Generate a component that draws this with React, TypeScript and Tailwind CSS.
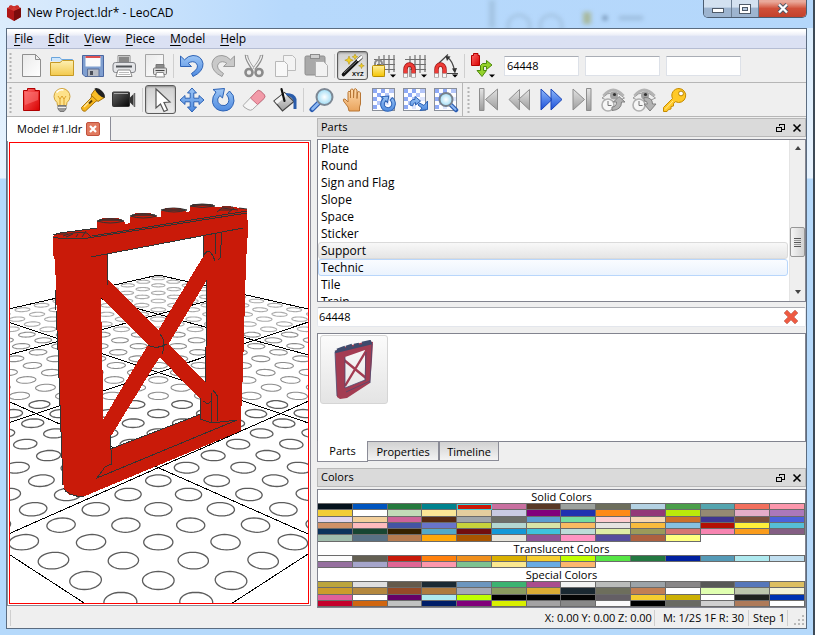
import type { ReactNode } from "react";

/* ---------- Swatch data ---------- */

const SOLID = [
  "#05131d", "#0055bf", "#257a3e", "#00838f", "#c91a09", "#c870a0", "#583927", "#9ba19d", "#6d6e5c", "#b4d2e3", "#4b9f4a", "#55a5af", "#f2705e", "#fc97ac",
  "#f2cd37", "#ffffff", "#c2dab8", "#fbe696", "#e4cd9e", "#c9cae2", "#81007b", "#2032b0", "#fe8a18", "#923978", "#bbe90b", "#958a73", "#e4adc8", "#ac78ba",
  "#e1d5ed", "#f3cf9b", "#cd6298", "#582a12", "#a0a5a9", "#6c6e68", "#5c9dd1", "#73dca1", "#fecccf", "#f6d7b3", "#cc702a", "#3f3691", "#7c503a", "#4c61db",
  "#d09168", "#febabd", "#4354a3", "#6874ca", "#c7d23c", "#b3d7d1", "#d9e4a7", "#f9ba61", "#e6e3e0", "#f8bb3d", "#86c1e1", "#b31004", "#fff03a", "#56bed6",
  "#0d325b", "#184632", "#352100", "#54a9c8", "#720e0f", "#1498d7", "#3ec2dd", "#bddcd8", "#dfeea5", "#9b9a5a", "#d67572", "#f785b1", "#fa9c1c", "#845e84",
  "#a0bcac", "#597184", "#b67b50", "#ffa70b", "#a95500", "#e6e3da", "#8e5597", "#ff94c2", "#564e9d", "#ad6140", "#ffff80",
];
const TRANSLUCENT = [
  "#fcfcfc", "#635f52", "#c91a09", "#ff800d", "#f08f1c", "#dab000", "#f5cd2f", "#c0ff00", "#56e646", "#237841", "#0020a0", "#559ab7", "#aee9ef", "#c1dff0",
  "#96709f", "#a5a5cb", "#df6695", "#fc97ac", "#7dc291", "#fbe890", "#68abe4", "#fcb76d",
];
const SPECIAL = [
  "#bba53d", "#dfdfdf", "#645a4c", "#1b2a34", "#6c96bf", "#3cb371", "#aa4d8e", "#f2f3f2", "#babcbb", "#9ca3a8", "#898788", "#575857", "#5677ba", "#dcbe61",
  "#cc9c2b", "#b4883e", "#964a27", "#ae7a3e", "#a5a9b4", "#899b5f", "#dbac34", "#1a2831", "#6d6e5c", "#c27f53", "#ffffff", "#e0ffb0", "#bdc6ad", "#f5f3d7",
  "#e0609a", "#ffffff", "#660066", "#aee9ef", "#c0ff00", "#000000", "#050505", "#050505", "#645f65", "#f5cd2f", "#ccb004", "#ffffff", "#20221f", "#0033b2",
  "#c4002b", "#d06610", "#c1c2c1", "#001d68", "#81007b", "#d9f000", "#a3a2a3", "#888888", "#fafafa", "#000000", "#696a62", "#d0d0d0", "#ae7a59", "#ffffff",
];

const CATEGORIES = ["Plate", "Round", "Sign and Flag", "Slope", "Space", "Sticker", "Support", "Technic", "Tile", "Train"];
const MENUS = ["File", "Edit", "View", "Piece", "Model", "Help"];

/* ---------- 3D viewport ---------- */

// Projects a baseplate position (in cells, 0..4 on both axes) to the canvas.
function project(u: number, v: number): [number, number] {
  const t = (u + v) / 2;
  const s = (u - v) / 2;
  const w = 1 - 0.1625 * t;
  return [158.3 + (145 * s) / w, (275 - 11.78 * t) / w];
}

function pathOf(points: [number, number][]) {
  return points.map(([x, y], i) => (i ? "L" : "M") + x.toFixed(1) + " " + y.toFixed(1)).join("");
}

const STUDS: { d: string; tone: number }[] = [];
for (let i = 0; i < 20; i++) {
  for (let j = 0; j < 20; j++) {
    const u = (i + 0.5) / 5;
    const v = (j + 0.5) / 5;
    const [x, y] = project(u, v);
    if (x < -10 || x > 330 || y > 625) continue;
    const ring: [number, number][] = [];
    for (let k = 0; k < 32; k++) {
      const a = (k * Math.PI) / 16;
      ring.push(project(u + 0.0615 * Math.cos(a), v + 0.0615 * Math.sin(a)));
    }
    STUDS.push({ d: pathOf(ring) + "Z", tone: (u + v) / 8 });
  }
}

const GRID = [0, 1, 2, 3, 4]
  .map((k) => pathOf([project(k, 0), project(k, 4)]) + pathOf([project(0, k), project(4, k)]))
  .join("");

const FRAME =
  "M53 236 L60 233 L97 228 V221 L103 218 H118 L125 222 V224 L130 223 V217 L136 213 H150 L157 217 L161 217 V211 L166 208 H180 L187 212 L190 211 V206 L194 204 H210 L215 207 L228 206 L247 209 L248 230 L246 262 L243 370 L240.500 431 L92 493 L83 497 L70 495 L64 490 L62 470 L59 380 L55 260 L53 255 Z" +
  "M107.500 254 L203.500 236 V256 L158.500 330 L107.500 279 Z" +
  "M101 297 L148 345 L132 371 L103.500 419 L102 345 Z" +
  "M207.500 279 L206.500 330 L205.500 382 L168.500 344 Z" +
  "M160 357 L173 371 L200.500 399 V414 L110.500 449 V437 L151.500 370 Z";

const EDGES =
  "M53 235 L60 233 L97 228 M53 237 Q62 240 88 238 L247 213 M92 236 L247 211 M91 257 L243 228 M107.500 254 V285 M203.500 236 V256 M215.500 234 V254 M222 233 L220 258 L218 260 M203 257 Q209 244 215 261 M55 290 L58 350 L60 405 L63 485 M207 280 L205.500 382 M148 345 Q156 350 167 344 M160 334 Q167 343 162 354 M63 488 Q68 496 84 497 M110.500 435 V449 L201 414 M111.500 450 V464 L105 467 L97 478 L237 420 M200.500 398 V419 L212 423 L237 420 M211.500 393 V423 M217.500 421 V396 L213 390 M203 401 L208 404 L211 401";

function Viewport() {
  return (
    <svg className="block min-h-0 w-full flex-1 border border-[#ff0000] bg-white" viewBox="9 143 300 460" preserveAspectRatio="xMidYMid slice" role="img" aria-label="Model view">
      <g fill="none">
        {STUDS.map((s, i) => (
          <path key={i} d={s.d} stroke={s.tone < 0.35 ? "#ababab" : s.tone < 0.6 ? "#8c8c8c" : "#5c5c5c"} strokeWidth={s.tone < 0.6 ? 1.1 : 1.3} />
        ))}
      </g>
      <path d={GRID} fill="none" stroke="#000" shapeRendering="crispEdges" />
      <path d={FRAME} fill="#c91a09" fillRule="evenodd" shapeRendering="crispEdges" />
      <path d={EDGES} fill="none" stroke="#333333" shapeRendering="crispEdges" />
      <g fill="none" stroke="#333333">
        <path d="M97 221 Q110 216 124 221 Q110 225 97 221 M130 216 Q143 211 157 216 Q143 220 130 216 M161 210 Q173 206 187 210 Q174 214 161 210 M190 206 Q202 202 215 206 Q202 209 190 206" />
        <path d="M99 220 H122 M132 215 H155 M163 210 H185 M192 205 H213" strokeWidth="1.400" />
        <path d="M63 236 Q75 231 87 233 L91 237 M66 237 L73 234 M76 237 L78 234 M82 237 L86 231 M217 212 L222 208 L238 210 M219 210 H232 M228 213 L234 208 M222 207 H233 M58 234 H68" />
        <path d="M247 209 L239 208" />
      </g>
    </svg>
  );
}

/* ---------- Icons ---------- */

function Ico({ children }: { children: ReactNode }) {
  return (
    <svg width="26" height="26" viewBox="0 0 26 26" fill="none" aria-hidden="true">
      {children}
    </svg>
  );
}

function Defs() {
  return (
    <svg width="0" height="0" className="absolute" aria-hidden="true">
      <defs>
        <linearGradient id="gBlue" x1="0" y1="0" x2="0" y2="1"><stop offset="0" stopColor="#9cc5f5" /><stop offset="1" stopColor="#4f8be0" /></linearGradient>
        <linearGradient id="gDeep" x1="0" y1="0" x2="0" y2="1"><stop offset="0" stopColor="#8db8fa" /><stop offset="1" stopColor="#1c50d8" /></linearGradient>
        <linearGradient id="gGray" x1="0" y1="0" x2="0" y2="1"><stop offset="0" stopColor="#e4e4e4" /><stop offset="1" stopColor="#9c9c9c" /></linearGradient>
        <linearGradient id="gPaper" x1="0" y1="0" x2="1" y2="1"><stop offset="0" stopColor="#e9e9e9" /><stop offset="1" stopColor="#ffffff" /></linearGradient>
        <linearGradient id="gGold" x1="0" y1="0" x2="0" y2="1"><stop offset="0" stopColor="#fff0a0" /><stop offset="1" stopColor="#f5c400" /></linearGradient>
        <linearGradient id="gFolder" x1="0" y1="0" x2="0" y2="1"><stop offset="0" stopColor="#fdf0b4" /><stop offset="1" stopColor="#f3c94c" /></linearGradient>
        <linearGradient id="gRed" x1="0" y1="0" x2="1" y2="1"><stop offset="0" stopColor="#ff6a6a" /><stop offset="1" stopColor="#d80000" /></linearGradient>
        <linearGradient id="gDark" x1="0" y1="0" x2="1" y2="1"><stop offset="0" stopColor="#666666" /><stop offset="1" stopColor="#050505" /></linearGradient>
        <linearGradient id="gSkin" x1="0" y1="0" x2="0" y2="1"><stop offset="0" stopColor="#ffdcae" /><stop offset="1" stopColor="#e9a35c" /></linearGradient>
        <radialGradient id="gLens"><stop offset="0" stopColor="#ffffff" /><stop offset="1" stopColor="#9fdcf5" /></radialGradient>
      </defs>
    </svg>
  );
}

const Arrow = () => <path d="M19 21.500 h6 l-3 3z" fill="#000" />;
const GridLines = () => <path d="M8 3 V24 M13 2 V24 M18 2 V20 M23 2 V19 M3 6.500 H24 M6 11.500 H24 M8 16.500 H24" stroke="#6f6f6f" strokeWidth="1.200" />;
const Magnet = () => (
  <>
    <path d="M3.500 24 V16.500 a4 5 0 0 1 8 0 V24" stroke="#9c1515" strokeWidth="4.400" />
    <path d="M3.500 21 V16.500 a4 5 0 0 1 8 0 V21" stroke="#ee3b36" strokeWidth="3" />
    <path d="M1.500 20.500 h4 v4 h-4z M9.500 20.500 h4 v4 h-4z" fill="#f6f6f6" stroke="#999" strokeWidth=".6" />
  </>
);
const Checker = () => (
  <>
    <rect x="1.500" y="1.500" width="22" height="22" fill="#fdfdff" stroke="#8a8f98" />
    <path d="M2 2h4v4h-4z M10 2h4v4h-4z M6 6h4v4h-4z M2 10h4v4h-4z M2 18h4v4h-4z" fill="#8ea9f5" />
    <path d="M18 2h5v4h-5z M14 6h4v4h-4z M10 10h4v4h-4z M6 14h4v4h-4z" fill="#b3c5f9" />
    <path d="M18 10h5v4h-5z M14 14h4v4h-4z M10 18h4v4h-4z" fill="#dde5fd" />
  </>
);
const Eye = () => (
  <>
    <path d="M3.500 9 Q13 -3 23.500 9" stroke="#b4b4b4" strokeWidth="3" />
    <path d="M2 11 Q13 0 24.500 11 Q13 18 2 11z" fill="#eee" stroke="#9a9a9a" />
    <circle cx="14" cy="8.500" r="4" fill="#a2a2a2" />
    <circle cx="14.500" cy="7.500" r="1.600" fill="#333" />
    <circle cx="8" cy="18" r="6" fill="#f6f6f6" stroke="#b0b0b0" strokeWidth="1.600" />
    <path d="M8 14 V18.500 H11.500" stroke="#777" />
  </>
);
const Undo = ({ gray }: { gray?: boolean }) => (
  <path d="M1.500 3 V13.500 H12.500 L9.200 10.300 Q14 7 17.500 10.500 Q21 15 12.500 20.500 L14 23.500 Q24.500 18.500 24 10.500 Q22.500 2.500 14 2.500 Q9 2.700 5.500 6.800 Z" fill={gray ? "#c9c9c9" : "url(#gBlue)"} stroke={gray ? "#9b9b9b" : "#2e63b6"} />
);

const ICONS: Record<string, ReactNode> = {
  "New": <path d="M4.500 1.500 H17.500 L22.500 6.500 V23.500 H4.500Z M17.500 1.500 V6.500 H22.500" fill="url(#gPaper)" stroke="#8f8f8f" />,
  "Open": (
    <>
      <path d="M2.500 8 V4.500 H11 L12.500 6.500 H23.500 V10" fill="#cfe6fb" stroke="#6aa5dc" />
      <path d="M1.500 9.500 H11 L13.500 7.500 H24.500 V22.500 H1.500Z" fill="url(#gFolder)" stroke="#c69a25" />
    </>
  ),
  "Save": (
    <>
      <path d="M2.500 2.500 H23.500 V23.500 H5 L2.500 21Z" fill="#7f9fd0" stroke="#4a66a0" />
      <path d="M5.500 3 H20.500 V13.500 H5.500Z" fill="#fafafa" />
      <path d="M5.500 3 H20.500 V5 H5.500Z" fill="#e05050" />
      <path d="M7.500 16 H19 V23.500 H7.500Z" fill="#b8bcc4" stroke="#5c6f96" />
      <path d="M10 18 h3 v4 h-3z" fill="#4a4e58" />
    </>
  ),
  "Print": (
    <>
      <path d="M7 2.500 H19 V11 H7Z" fill="#fff" stroke="#8a8a8a" />
      <path d="M8 3.500 H18 V10 H8Z" fill="#888" />
      <rect x="2" y="9.500" width="22.500" height="10" rx="2.500" fill="#e4e5e8" stroke="#828489" />
      <path d="M5 13.500 H21" stroke="#4f5257" strokeWidth="2" />
      <path d="M7 17 H19 L21 23.500 H5Z" fill="#fff" stroke="#8a8a8a" />
      <path d="M8 19.500 H18 M7.500 21.500 H19" stroke="#bbb" />
    </>
  ),
  "Print Preview": (
    <>
      <path d="M3.500 1.500 H21.500 V23.500 H3.500Z" fill="url(#gPaper)" stroke="#a4a4a4" />
      <path d="M14 11.500 H22 V16 H14Z" fill="#8b8b8b" stroke="#777" />
      <rect x="11.500" y="15" width="13" height="6.500" rx="1" fill="#dcdcdc" stroke="#777" />
      <path d="M13.500 17.500 H22.500" stroke="#444" />
      <path d="M14.500 19.500 H21.500 L22.500 24 H13.500Z" fill="#fff" stroke="#888" />
    </>
  ),
  "Undo": <Undo />,
  "Redo": <g transform="matrix(-1 0 0 1 26 0)"><Undo gray /></g>,
  "Cut": (
    <>
      <path d="M5.500 2 Q5 6 12 16 M20.500 2 Q21 6 13 16" stroke="#8c8c8c" strokeWidth="3.400" />
      <path d="M5.500 2.500 Q5.500 6 12 15.500 M20.500 2.500 Q20.500 6 13 15.500" stroke="#f1f1f1" strokeWidth="1.400" />
      <circle cx="8" cy="19.500" r="3.500" stroke="#8b8b8b" strokeWidth="2.600" />
      <circle cx="18" cy="19.500" r="3.500" stroke="#8b8b8b" strokeWidth="2.600" />
    </>
  ),
  "Copy": (
    <>
      <path d="M11.500 2.500 H20.500 L23.500 5.500 V17.500 H11.500Z" fill="#f3f3f3" stroke="#bcbcbc" />
      <path d="M3.500 8.500 H12.500 L15.500 11.500 V23.500 H3.500Z" fill="#f8f8f8" stroke="#b8b8b8" />
    </>
  ),
  "Paste": (
    <>
      <rect x="2" y="3" width="20" height="19" rx="1.500" fill="#a9a9a9" stroke="#8d8d8d" />
      <rect x="7.500" y="1.500" width="9" height="4" fill="#cfcfcf" stroke="#8b8b8b" />
      <path d="M12.500 8.500 H20.500 L24.500 12.500 V23.500 H12.500Z" fill="#f2f2f2" stroke="#b0b0b0" />
    </>
  ),
  "Relative Transforms": (
    <>
      <path d="M3.500 21.500 L21 4.500" stroke="#111" strokeWidth="3.600" strokeLinecap="round" />
      <path d="M18 7 L21.500 4" stroke="#fff" strokeWidth="2.400" strokeLinecap="round" />
      <path d="M4 20 L17 8" stroke="#777" />
      <path d="M9 3 l1.200 3 3 1.200 -3 1.200 -1.200 3 -1.200 -3 -3 -1.200 3 -1.200z M15 1 l.8 2 2 .8 -2 .8 -.8 2 -.8 -2 -2 -.8 2 -.8z M21.500 10 l.8 2 2 .8 -2 .8 -.8 2 -.8 -2 -2 -.8 2 -.8z" fill="#f3d024" stroke="#a88a10" strokeWidth=".5" />
      <text x="12" y="23" fontSize="6" fontWeight="bold" fontFamily="Liberation Sans, sans-serif" fill="#000">XYZ</text>
    </>
  ),
  "Lock": (
    <>
      <GridLines />
      <path d="M4 13 V10.500 a3.500 3.500 0 0 1 7 0 V13" stroke="#8b8b8b" strokeWidth="2" />
      <rect x="1.500" y="12.500" width="12" height="11" rx="1" fill="url(#gGold)" stroke="#b88d00" />
      <Arrow />
    </>
  ),
  "Snap Move": <><GridLines /><Magnet /><Arrow /></>,
  "Snap Angle": (
    <>
      <path d="M6 10 L15 1.500 M14 20.500 H25" stroke="#444" strokeWidth="1.200" />
      <path d="M14 4 Q20 8 21.500 18" stroke="#444" strokeWidth="1.300" />
      <path d="M12.500 3 l5 .5 -3.500 4.500z M19 15.500 l5 -.5 -2 5.500z" fill="#333" />
      <Magnet />
      <Arrow />
    </>
  ),
  "Transform": (
    <>
      <path d="M3.500 2.500 V.5 H8 V2.500 H9.500 V12.500 H1.500 V2.500Z" fill="url(#gRed)" stroke="#b30000" />
      <path d="M12.500 10.500 H16.500 V7.500 L22 12 L16.500 16.500 V13.500 H13.500 V17.500 H16.500 L12 23.500 L7 17.500 H10.500 V12.500z" fill="#94d22b" stroke="#4d8a0d" />
      <Arrow />
    </>
  ),
  "Insert Piece": (
    <>
      <path d="M9.500 3.500 V1.500 H17 V3.500 H21.500 V23.500 H5.500 V3.500Z" fill="url(#gRed)" stroke="#b00000" />
      <path d="M7 5 H20 V13 L7 18Z" fill="#ff8585" opacity=".45" />
    </>
  ),
  "Light": (
    <>
      <path d="M13 1.500 a8 8 0 0 1 8 8 q0 3.500 -3 6 l-.5 3 h-9 l-.5 -3 q-3 -2.500 -3 -6 a8 8 0 0 1 8 -8z" fill="#fde28a" stroke="#cfa23a" />
      <path d="M9 9 l2 3 2 -3 2 3 2 -3 M11 12 v6 M15 12 v6" stroke="#d99a20" strokeWidth=".9" />
      <path d="M7.500 5.500 q3 -3.500 7 -2.500" stroke="#fff" strokeWidth="1.600" />
      <path d="M9 18.500 h8 v3.500 l-2 2.500 h-4 l-2 -2.500z" fill="#9a9a9a" stroke="#777" />
      <path d="M9 20.500 h8" stroke="#eee" />
    </>
  ),
  "Spotlight": (
    <>
      <path d="M1.500 20.500 L11 11 L12 7 L18 13 L15 15 L5.500 24 Q2 25 1.500 20.500z" fill="#f8b820" stroke="#a8730a" />
      <path d="M11 8 L15 2.500 L24.500 10.500 L18 14.500z" fill="#f9bd25" stroke="#a8730a" />
      <path d="M14.500 1.500 Q18 0 22 4 T24.500 11 Q21 10 18.500 7.500 T14.500 1.500z" fill="#222" />
      <path d="M4 20 L11 13" stroke="#ffe9a0" strokeWidth="1.500" />
      <path d="M9 16.500 l3 -3" stroke="#5c3d00" strokeWidth="2" />
    </>
  ),
  "Camera": (
    <>
      <rect x="1.500" y="5" width="17" height="14.500" rx="1" fill="url(#gDark)" stroke="#333" />
      <path d="M3 6.500 H17" stroke="#aaa" />
      <path d="M18.500 11 L22.500 7 V19 L18.500 15z" fill="#333" />
      <path d="M23.500 6 V20" stroke="#666" strokeWidth="1.500" />
    </>
  ),
  "Select": <path d="M8 2 V21 L12.500 17 L16 24.500 L19.500 23 L16 15.500 L22 15z" fill="#fff" stroke="#555" strokeWidth="1.200" />,
  "Move": <path d="M13 1 L17.500 6 H14.800 V11.200 H20 V8.500 L25 13 L20 17.500 V14.800 H14.800 V20 H17.500 L13 25 L8.500 20 H11.200 V14.800 H6 V17.500 L1 13 L6 8.500 V11.200 H11.200 V6 H8.500z" fill="url(#gBlue)" stroke="#2c62b5" />,
  "Rotate": <path d="M3 2.500 L14.500 1.500 L12.500 11 L9.800 8.500 Q6.500 12 8 15.500 Q10.500 19.500 15 18.500 Q20 16 18.500 11 Q17.800 9 16.500 7.500 L19.500 4 Q24.500 8 24 14 Q22.500 24 13 24 Q4.500 23.500 2.500 15.500 Q2 9.500 6 5z" fill="url(#gBlue)" stroke="#2c62b5" />,
  "Delete": (
    <>
      <path d="M3 17.500 L15.500 4.500 Q17.500 2.500 19.500 4 L23.500 8 Q24.500 10 23 11.500 L11.500 22.500 Q9.500 24 7 22.500 L3 20 Q1.500 18.500 3 17.500z" fill="#f5f5f5" stroke="#a8a8a8" />
      <path d="M9.500 11 L15.500 4.500 Q17.500 2.500 19.500 4 L23.500 8 Q24.500 10 23 11.500 L16.500 17.500z" fill="#f29aa8" stroke="#cc6f80" />
    </>
  ),
  "Paint": (
    <>
      <path d="M2 14 L12.500 5.500 L22 14.500 L10.500 24z" fill="url(#gGray)" stroke="#444" strokeWidth="1.200" />
      <path d="M2.500 14 L12.500 6 L15 8.500 L5 17z" fill="#f4f4f4" />
      <path d="M12.500 14 L9.500 2" stroke="#111" strokeWidth="2.200" strokeLinecap="round" />
      <path d="M14 6 Q23 6 24.500 12 V22 H21.500 V14 Q20 9.500 14 8z" fill="#2a5caa" />
    </>
  ),
  "Zoom": (
    <>
      <path d="M3 22.500 L10 15.500" stroke="#2a5bb0" strokeWidth="5" strokeLinecap="round" />
      <path d="M3.500 22 L10 15.500" stroke="#8db8f2" strokeWidth="2.600" strokeLinecap="round" />
      <circle cx="15.500" cy="10" r="8" fill="url(#gLens)" stroke="#7d8894" strokeWidth="2" />
    </>
  ),
  "Pan": <path d="M9 24 L8 20 L3.500 14 Q2.500 11.500 5 12 L8 15 V5.500 Q8.500 3 10.500 5 V11 V3 Q11.500 .5 13.500 3 V11 L14 2.500 Q15.500 .5 17 3 V11.500 L17.500 5 Q19.500 3.500 20.500 6 V17 L19.500 20 V24z" fill="url(#gSkin)" stroke="#b87635" />,
  "Orbit": <><Checker /><g transform="translate(8 8) scale(.68)"><path d="M3 2.500 L14.500 1.500 L12.500 11 L9.800 8.500 Q6.500 12 8 15.500 Q10.500 19.500 15 18.500 Q20 16 18.500 11 Q17.800 9 16.500 7.500 L19.500 4 Q24.500 8 24 14 Q22.500 24 13 24 Q4.500 23.500 2.500 15.500 Q2 9.500 6 5z" fill="url(#gBlue)" stroke="#2c62b5" strokeWidth="1.500" /></g></>,
  "Roll": (
    <>
      <Checker />
      <path d="M8 18 Q8 12 13 12.500 V9.500 L18.500 14 L13.500 18 V15.500 Q11.500 15.500 10.500 19z M25.500 14 V22.500 L18 23.500 L20 21 L16 18 L17.500 16 L22 18.500z" fill="url(#gBlue)" stroke="#2c62b5" />
    </>
  ),
  "Zoom Region": (
    <>
      <Checker />
      <path d="M17.500 17.500 L23 23" stroke="#2a5bb0" strokeWidth="4.500" strokeLinecap="round" />
      <path d="M18 18 L22.500 22.500" stroke="#8db8f2" strokeWidth="2" strokeLinecap="round" />
      <circle cx="13" cy="12.500" r="6.500" fill="url(#gLens)" stroke="#76808c" strokeWidth="2" />
    </>
  ),
  "First Step": <path d="M3.500 1.500 H8 V23.500 H3.500Z M21.500 2 V23 L9.500 12.500z" fill="url(#gGray)" stroke="#8d8d8d" />,
  "Previous Step": <path d="M12.500 2.500 V23 L2 12.500z M22.500 2.500 V23 L11.500 12.500z" fill="url(#gGray)" stroke="#8d8d8d" />,
  "Next Step": <path d="M13 2 V23 L24 12.500z M3 2 V23 L14 12.500z" fill="url(#gDeep)" stroke="#1b45b8" />,
  "Last Step": <path d="M17.500 1.500 H22 V23.500 H17.500Z M4 2 V23 L15.500 12.500z" fill="url(#gGray)" stroke="#8d8d8d" />,
  "Show Step Earlier": <><Eye /><path d="M12 20 Q16.500 20 16.500 15 H13.500 L19 9.500 L25 15 H21.500 Q21.500 23 12 23.500z" fill="#b3b3b3" stroke="#808080" /></>,
  "Show Step Later": <><Eye /><path d="M13 10.500 Q21.500 10 21.500 17 H25 L19 24 L13 17 H16.500 Q16.500 14 13 13.500z" fill="#b3b3b3" stroke="#808080" /></>,
  "Add Keys": (
    <>
      <path d="M17 1.500 a7 7 0 1 1 -3.500 13.200 L11.500 16.500 V19 L9 19.500 V22 L6.500 22.500 L5 24.500 H1.500 V20.500 L10.500 11.500 A7 7 0 0 1 17 1.500z" fill="#ffc928" stroke="#c48a00" />
      <circle cx="19" cy="6.500" r="2.400" fill="#fff" stroke="#b98400" />
      <path d="M3 22.500 L11 14" stroke="#ffe890" />
    </>
  ),
};

const FILE_BAR = ["New", "Open", "Save", "Print", "Print Preview", "|", "Undo", "Redo", "Cut", "Copy", "Paste", "|", "Relative Transforms", "Lock", "Snap Move", "Snap Angle", "|", "Transform"];
const TOOL_BAR = ["Insert Piece", "Light", "Spotlight", "Camera", "|", "Select", "Move", "Rotate", "Delete", "Paint", "|", "Zoom", "Pan", "Orbit", "Roll", "Zoom Region"];
const TIME_BAR = ["First Step", "Previous Step", "Next Step", "Last Step", "Show Step Earlier", "Show Step Later", "Add Keys"];
const PRESSED = ["Relative Transforms", "Select"];

function Tools({ items }: { items: string[] }) {
  return (
    <>
      {items.map((name, i) =>
        name === "|" ? (
          <span key={i} className="flex w-1.5 justify-center"><span className="h-6 w-px bg-[#cfcfcf]" /></span>
        ) : (
          <button
            key={i}
            type="button"
            aria-label={name}
            className={
              PRESSED.includes(name)
                ? "flex h-[29px] w-[31px] items-center justify-center rounded-[3px] border border-[#5c5c5c] bg-linear-to-b from-[#cfcfcf] to-[#ececec] shadow-[inset_0_1px_2px_#8a8a8a]"
                : "flex h-[29px] w-[31px] items-center justify-center"
            }
          >
            <Ico>{ICONS[name]}</Ico>
          </button>
        )
      )}
    </>
  );
}

function Handle() {
  return (
    <svg width="4" height="27" viewBox="0 0 4 27" aria-hidden="true" className="mr-0.5 ml-0.5">
      <path d="M1.500 1 V27" stroke="#b4b4b4" strokeWidth="2" strokeDasharray="2 2" />
    </svg>
  );
}

/* ---------- Panels ---------- */

function DockTitle({ title }: { title: string }) {
  return (
    <div className="flex h-[19px] shrink-0 items-center gap-1.5 border border-[#b8b8b8] bg-[#dadada] pr-[3px] pl-[3px] text-[11px]">
      <h2 className="flex-1">{title}</h2>
      <button type="button" aria-label={"Float " + title}>
        <svg width="10" height="10" viewBox="0 0 10 10" fill="none" stroke="#000" shapeRendering="crispEdges" aria-hidden="true">
          <path d="M3.500 3 V1.500 H8.500 V6.500 H6 M3 1 H9 M.5 4.500 H5.500 V8.500 H.5Z M0 4 H6" />
        </svg>
      </button>
      <button type="button" aria-label={"Close " + title}>
        <svg width="10" height="10" viewBox="0 0 10 10" fill="none" stroke="#000" strokeWidth="1.600" aria-hidden="true">
          <path d="M1.500 1.500 L8.500 8.500 M8.500 1.500 L1.500 8.500" />
        </svg>
      </button>
    </div>
  );
}

function Swatches({ colors, rows, selected }: { colors: string[]; rows: string; selected?: number }) {
  return (
    <div className={"grid min-h-0 basis-0 grid-cols-14 " + rows}>
      {colors.map((c, i) => (
        <button
          key={i}
          type="button"
          aria-label={"Color " + c}
          className={i === selected ? "border border-[#3fd0dc]" : "border-r border-b border-[#6b6b6b]"}
          style={{ backgroundColor: c }}
        />
      ))}
    </div>
  );
}

const GROUP_TITLE = "h-[14px] shrink-0 border-b border-[#6b6b6b] text-center text-[11px] leading-[13px]";

function Thumbnail() {
  return (
    <svg width="40" height="60" viewBox="0 0 40 60" aria-hidden="true">
      <path d="M1 11 L10 7 L34 1 L39 2 L38 20 L36 43 L13 58 L6 59 L3 57 L2 35z M11 17 V48 L31 40 V10z" fill="#a33c52" fillRule="evenodd" />
      <path d="M10 20 L32 38 M11 46 L32 11" stroke="#a33c52" strokeWidth="2.400" />
      <path d="M1 12 L38 3 M3 10 l8 -3 M12 7 l6 -2 M20 5 l5 -1 M28 3 l9 -2" stroke="#3f4a6c" strokeWidth="2.500" />
      <path d="M1 12 L3 56 M32 12 L31 41 M11 17 V48 M12 52 L36 41 M38 4 L36 43 M11 48 L31 40" stroke="#4d4a70" strokeWidth=".8" fill="none" />
    </svg>
  );
}

export default function App() {
  return (
    <div className="flex h-screen flex-col overflow-hidden border-r-2 border-[#3d4a57] bg-linear-to-b from-[#d9ecfd] from-0% via-[#e8f3fe] via-[178px] to-[#b5d9fb] to-[179px] pr-1.5 pb-1.5 pl-1.5 font-['Open_Sans','Noto_Sans',sans-serif] text-[12px] text-black">
      <Defs />
      {/* Window title bar */}
      <header className="-mx-1.5 flex h-7 shrink-0 items-start overflow-hidden bg-linear-to-r from-[#dcecfc] via-[#b7d9fc] via-35% to-[#b4d7fb] pr-1.5 pl-1.5">
        <svg width="16" height="18" viewBox="0 0 16 18" className="mt-1 shrink-0" aria-hidden="true">
          <path d="M1 4 L8 2 L15 4 V13 L8 17 L1 13z" fill="#b01717" />
          <path d="M1 4 L8 7 L15 4 L8 2z" fill="#d43a34" />
          <path d="M8 7 L15 4 V13 L8 17z" fill="#7b0c0c" />
          <path d="M3 2 l2 -1 2 1 v2 l-2 1 -2 -1z M9 2 l2 -1 2 1 v2 l-2 1 -2 -1z" fill="#c9302b" />
        </svg>
        <h1 className="ml-[5px] flex-1 leading-[25px] whitespace-nowrap">New Project.ldr* - LeoCAD</h1>
        <div className="mr-[60px] flex h-7 items-end gap-3 blur-[2px]" aria-hidden="true">
          <span className="h-7 w-1.5 bg-[#a3c3e2]" />
          <span className="-mb-2.5 flex gap-2 pr-2"><span className="h-6 w-6 rounded-full border-2 border-[#9dbbd8]" /><span className="h-6 w-6 rounded-full border-2 border-[#9dbbd8]" /></span>
          <span className="mb-1 h-3 w-2 bg-[#a8b99e]" />
          <span className="mb-2 h-1 w-1 bg-[#5e7c9d]" />
          <span className="mb-2 h-1 w-6 bg-[#9bbbdb]" />
        </div>
        <div className="flex h-[18px] overflow-hidden rounded-b-[5px] border border-t-0 border-[#4b5d72]">
          <button type="button" aria-label="Minimize" className="flex w-7 items-center justify-center border-r border-[#6a7d92] bg-linear-to-b from-[#d3e1f0] from-40% to-[#9db4cf] to-50%">
            <span className="mt-1 h-[5px] w-3 border border-[#4f5a68] bg-white" />
          </button>
          <button type="button" aria-label="Maximize" className="flex w-[27px] items-center justify-center border-r border-[#6a7d92] bg-linear-to-b from-[#d3e1f0] from-40% to-[#9db4cf] to-50%">
            <span className="flex h-[10px] w-3 items-center justify-center border border-[#4f5a68] bg-white"><span className="h-1 w-1.5 border border-[#4f5a68] bg-[#b7c9de]" /></span>
          </button>
          <button type="button" aria-label="Close" className="flex w-[47px] items-center justify-center bg-linear-to-b from-[#e9a99b] from-10% via-[#d0503a] via-50% to-[#c2412c]">
            <svg width="12" height="11" viewBox="0 0 12 11" aria-hidden="true">
              <path d="M2 1.500 L10 9.500 M10 1.500 L2 9.500" stroke="#4c5868" strokeWidth="4.200" />
              <path d="M2 1.500 L10 9.500 M10 1.500 L2 9.500" stroke="#fff" strokeWidth="2.400" />
            </svg>
          </button>
        </div>
      </header>

      <div className="flex min-h-0 flex-1 flex-col border border-[#5b6c80] bg-[#efefef]">
        {/* Menu bar */}
        <nav className="flex h-5 shrink-0 items-center gap-[15px] border-b border-[#b5bdd3] bg-linear-to-b from-white from-10% via-[#eef0f8] via-30% to-[#dbe1f3] to-40% pl-[7px]">
          {MENUS.map((m) => (
            <button key={m} type="button"><span className="underline underline-offset-2">{m[0]}</span>{m.slice(1)}</button>
          ))}
        </nav>

        {/* Toolbars */}
        <div className="flex h-[34px] shrink-0 items-center border-b border-[#b6b6b6]">
          <Handle />
          <Tools items={FILE_BAR} />
          <div className="ml-1.5 flex gap-1.5 text-[11px]">
            {["X", "Y", "Z"].map((axis) => (
              <input key={axis} aria-label={axis} defaultValue={axis === "X" ? "64448" : ""} className="h-5 w-[75px] border border-[#dde1e8] border-t-[#a9adb5] bg-white px-0.5" />
            ))}
          </div>
        </div>
        <div className="flex h-[34px] shrink-0 items-center border-b border-[#b6b6b6]">
          <Handle />
          <Tools items={TOOL_BAR} />
          <span className="mr-0.5 h-full w-0.5 border-r border-[#b6b6b6]" />
          <Handle />
          <Tools items={TIME_BAR} />
        </div>

        <main className="grid min-h-0 flex-1 grid-cols-[304fr_489fr] gap-x-1.5 pt-px">
          {/* Document view */}
          <section className="flex min-h-0 min-w-0 flex-col">
            <div className="-mt-px flex h-6 shrink-0">
              <div className="flex items-center gap-1 border-r border-[#8b8c97] bg-white pr-2.5 pl-2.5 text-[11px]">
                <span>Model #1.ldr</span>
                <button type="button" aria-label="Close Model #1.ldr" className="flex h-3.5 w-3.5 items-center justify-center rounded-[2px] border border-[#c2513c] bg-[#e07a5f]">
                  <svg width="8" height="8" viewBox="0 0 8 8" aria-hidden="true"><path d="M1 1 L7 7 M7 1 L1 7" stroke="#fff" strokeWidth="2.200" /></svg>
                </button>
              </div>
              <div className="flex-1 border-b border-[#8b8c97]" />
            </div>
            <div className="mb-0.5 flex min-h-0 flex-1 flex-col border border-t-0 border-[#8b8c97] bg-white p-px">
              <Viewport />
            </div>
          </section>

          {/* Docked panels */}
          <aside className="flex min-h-0 min-w-0 flex-col">
            <DockTitle title="Parts" />
            <div className="mt-0.5 flex h-[163px] shrink-0 border border-[#82848f] bg-white">
              <ul className="min-w-0 flex-1 overflow-hidden pr-px text-[12px]">
                {CATEGORIES.map((c) => (
                  <li
                    key={c}
                    className={
                      c === "Support"
                        ? "h-[17px] rounded-[3px] border border-[#dadada] bg-linear-to-b from-[#f8f8f8] to-[#e5e5e5] pl-0.5 leading-[15px]"
                        : c === "Technic"
                          ? "h-[17px] rounded-[3px] border border-[#b8d6fb] bg-linear-to-b from-[#fafcff] to-[#ebf3fd] pl-0.5 leading-[15px]"
                          : "h-[17px] pl-[3px] leading-[17px]"
                    }
                  >
                    {c}
                  </li>
                ))}
              </ul>
              <div className="flex w-4 shrink-0 flex-col items-center border-l border-[#e4e4e4] bg-[#efefef] py-1.5" aria-hidden="true">
                <svg width="8" height="5" viewBox="0 0 8 5"><path d="M4 0 L7 4 H1z" fill="#444" /></svg>
                <span className="mt-[76px] flex h-[30px] w-[15px] flex-col items-center justify-center gap-px rounded-[2px] border border-[#979797] bg-linear-to-r from-[#f5f5f5] to-[#d2d2d2]">
                  <span className="h-px w-[7px] bg-[#555]" /><span className="h-px w-[7px] bg-[#999]" /><span className="h-px w-[7px] bg-[#555]" /><span className="h-px w-[7px] bg-[#999]" /><span className="h-px w-[7px] bg-[#555]" />
                </span>
                <span className="flex-1" />
                <svg width="8" height="5" viewBox="0 0 8 5"><path d="M1 0 H7 L4 4z" fill="#444" /></svg>
              </div>
            </div>

            <div className="mt-[5px] flex h-5 shrink-0 items-center rounded-[2px] border border-[#e3e6ec] border-t-[#abadb3] bg-white pr-1.5 text-[11px]">
              <input aria-label="Search parts" defaultValue="64448" className="min-w-0 flex-1 px-px outline-none" />
              <button type="button" aria-label="Clear search">
                <svg width="16" height="16" viewBox="0 0 16 16" aria-hidden="true">
                  <path d="M1 4 L4 1 L8 5 L12 1 L15 4 L11 8 L15 12 L12 15 L8 11 L4 15 L1 12 L5 8z" fill="#ee5a42" stroke="#c98074" strokeWidth=".8" />
                </svg>
              </button>
            </div>

            <div className="mt-1.5 min-h-0 flex-1 border border-[#82848f] bg-white p-0.5 pt-px">
              <button type="button" aria-label="Part 64448" className="flex h-[69px] w-[68px] items-center justify-center rounded-[3px] border border-[#d5d5d5] bg-linear-to-b from-[#fbfbfb] to-[#e4e4e4]">
                <Thumbnail />
              </button>
            </div>

            <div role="tablist" className="-mt-px flex h-[21px] shrink-0 items-start text-[11px]">
              <button type="button" role="tab" aria-selected="true" className="h-[21px] w-[51px] border border-t-0 border-[#8b8c97] bg-white">Parts</button>
              <button type="button" role="tab" className="h-5 w-[71px] border border-l-0 border-[#8b8c97] bg-linear-to-b from-[#d2d2d2] to-[#f3f3f3] leading-[17px]">Properties</button>
              <button type="button" role="tab" className="h-5 w-[60px] border border-[#8b8c97] bg-linear-to-b from-[#d2d2d2] to-[#f3f3f3] leading-[17px]">Timeline</button>
            </div>

            <div className="mt-1.5 flex shrink-0 flex-col"><DockTitle title="Colors" /></div>
            <div className="mt-0.5 flex h-[119px] shrink-0 flex-col border border-[#82848f] bg-white">
              <h3 className={GROUP_TITLE}>Solid Colors</h3>
              <Swatches colors={SOLID} rows="grow-[6] grid-rows-6" selected={4} />
              <h3 className={GROUP_TITLE}>Translucent Colors</h3>
              <Swatches colors={TRANSLUCENT} rows="grow-[2] grid-rows-2" />
              <h3 className={GROUP_TITLE}>Special Colors</h3>
              <Swatches colors={SPECIAL} rows="grow-[4] grid-rows-4" />
            </div>
          </aside>
        </main>

        {/* Status bar */}
        <footer className="flex h-5 shrink-0 items-center pl-[3px] text-[11px] whitespace-nowrap">
          <span className="h-4 w-px bg-[#cfcfcf]" />
          <span className="flex-1" />
          <span className="pr-0.5">X: 0.00 Y: 0.00 Z: 0.00</span>
          <span className="h-4 w-px bg-[#cfcfcf]" />
          <span className="pr-1 pl-2">M: 1/2S 1F R: 30</span>
          <span className="h-4 w-px bg-[#cfcfcf]" />
          <span className="pr-0.5 pl-1">Step 1</span>
          <span className="h-4 w-px bg-[#cfcfcf]" />
          <svg width="12" height="14" viewBox="0 0 12 14" fill="#b9b9b9" aria-hidden="true" className="ml-1.5">
            <path d="M8 4h2v2h-2z M4 8h2v2h-2z M8 8h2v2h-2z M0 12h2v2h-2z M4 12h2v2h-2z M8 12h2v2h-2z" />
          </svg>
        </footer>
      </div>
    </div>
  );
}
